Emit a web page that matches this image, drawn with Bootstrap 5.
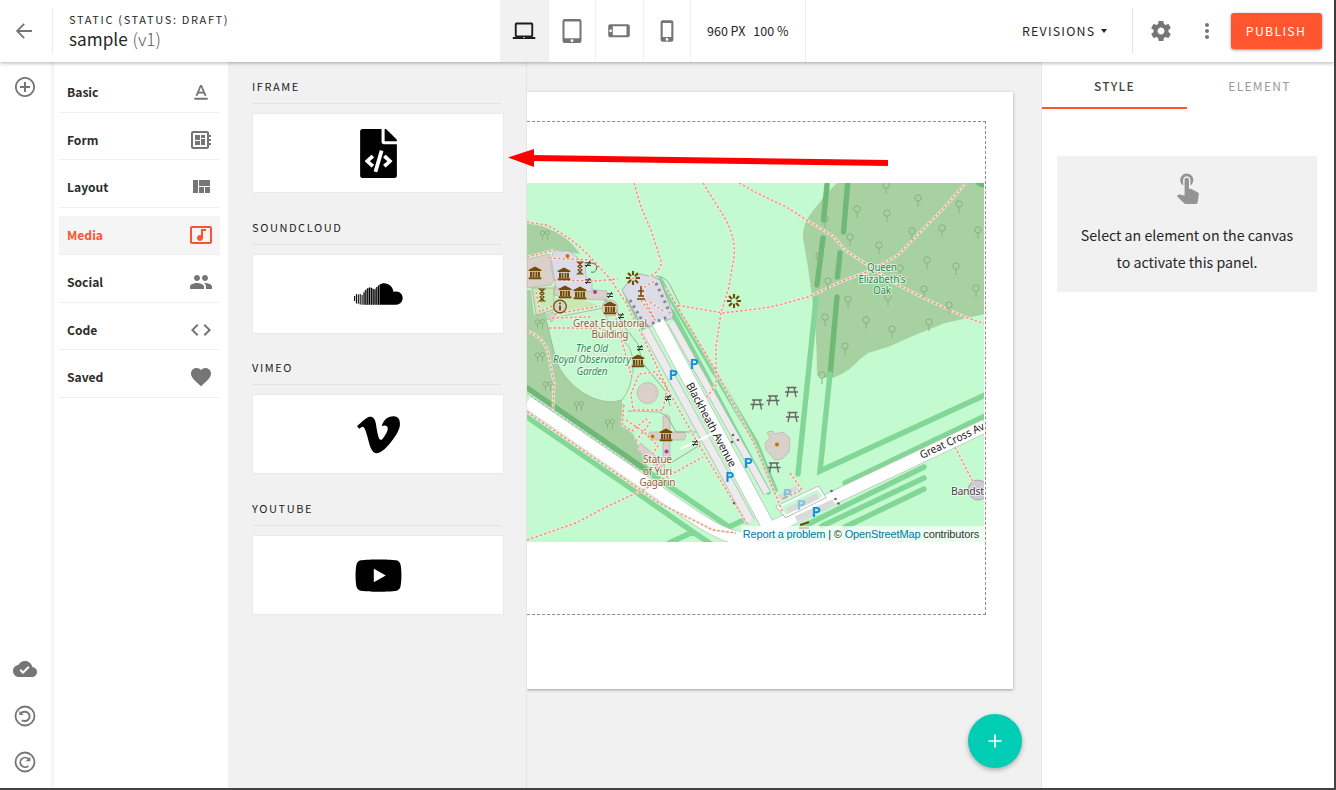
<!DOCTYPE html>
<html lang="en">
<head>
<meta charset="utf-8">
<meta name="viewport" content="width=device-width, initial-scale=1">
<title>sample (v1)</title>
<link href="https://cdn.jsdelivr.net/npm/bootstrap@5.3.0/dist/css/bootstrap.min.css" rel="stylesheet">
<script src="https://cdn.jsdelivr.net/npm/bootstrap@5.3.0/dist/js/bootstrap.bundle.min.js" defer></script>
<style>
:root{--ui:"Noto Sans CJK SC","Noto Sans",sans-serif;--ink:#262626;--mute:#757575;--accent:#ff562f;--bg:#f1f1f1}
html,body{height:100%}
body{font-family:var(--ui);font-size:14px;line-height:20px;color:var(--ink);background:#434343;overflow:hidden}
svg{display:block;flex:none}
.ic{fill:currentColor}
.app{width:1334px;height:788px;background:#fff}
.topbar{height:62px;background:#fff;box-shadow:0 1px 4px rgba(0,0,0,.32);z-index:5}
.back{width:53px;height:46px;border-right:1px solid #ececec;color:var(--mute)}
.back svg{margin-left:12px}
.titles{width:447px;padding:11px 0 0 16px;height:62px}
.eyebrow{font-size:11px;letter-spacing:1.65px;line-height:17px}
.doc{font-size:17.2px;line-height:21px;letter-spacing:0}
.doc span{font-weight:300;color:#5a5a5a;margin-left:1px}
.device{width:47.5px;height:62px;color:var(--mute);border-right:1px solid #f0f0f0}
.device.on{background:var(--bg);color:#1d1d1d;width:48.5px}
.zoomtxt{width:114.5px;height:62px;border-right:1px solid #ececec;font-size:12.5px;padding-left:16px;gap:8px}
.rev{font-size:12.4px;letter-spacing:1.2px;margin-left:216.5px;width:110.500px;height:46px;border-right:1px solid #e6e6e6}
.caret{border:3.5px solid transparent;border-top:4.5px solid #222;border-bottom:0;margin-left:6px}
.gear{color:var(--mute);margin-left:16px}
.more{color:var(--mute);margin-left:22.5px}
.pub{width:91px;height:36px;background:var(--accent);color:#fff;font-size:12.3px;letter-spacing:1.3px;border:0;border-radius:3px;padding:0;margin-right:12.500px;box-shadow:0 1px 3px rgba(0,0,0,.45);line-height:36px}
.rail{width:54px;background:#fff;color:var(--mute);border-right:3px solid #f6f6f6;padding:13px 0 14px 13px}
.undo{margin-top:22.5px}
.cats{width:174px;padding:3px 8px 0 5px;background:#fff}
.cat{height:39.5px;margin-top:8px;padding:0 7px 0 8px;border-bottom:1px solid #f0f0f0;font-weight:700;font-size:12.1px;color:#2c2c2c}
.cat svg{color:var(--mute)}
.cat.on{background:#f5f5f5}
.cat.on,.cat.on svg{color:#f9542f}
.tray{width:299px;background:var(--bg);border-right:1px solid #e4e4e4;padding:14px 22px 0 24px;z-index:2}
.kind{height:140.7px}
.kind h2{font-size:11px;font-weight:400;letter-spacing:1.58px;line-height:20px;margin:0 3px 9px 0;height:28px;border-bottom:1px solid #e2e2e2;color:#222}
.tile{height:80px;background:#fff;border:1px solid #e9e9e9;color:#000}
.stage{width:515px;background:var(--bg);border-right:1px solid #e9e9e9}
.sheet{width:486px;height:597px;margin-top:30px;padding-top:29px;background:#fff;box-shadow:0 1px 3px rgba(0,0,0,.35)}
.drop{width:458.5px;height:494px;border:1px dashed #8c8c8c;border-left:0;padding-top:61px}
.map{width:457px;height:359px}
.credit{right:0;bottom:0;height:16px;padding:0 5px 0 2px;background:rgba(255,255,255,.7);font:11px/17px "Liberation Sans",sans-serif;letter-spacing:-.15px;color:#333;white-space:nowrap}
.credit span{color:#0078a8}
.fab{left:968px;top:714px;width:54px;height:54px;background:#00cdb3;box-shadow:0 2px 5px rgba(0,0,0,.3);z-index:6}
.arrow{left:508px;top:145px;z-index:7}
.side{width:292px;background:#fff}
.tab{flex:0 0 145px;height:47px;text-align:center;font-size:12px;line-height:48px;letter-spacing:1.3px;color:#9a9a9a}
.tab.on{font-weight:500;color:#444;border-bottom:2px solid var(--accent)}
.hint{margin:47px 0 0 15px;width:260px;height:136px;background:var(--bg);font-size:14.2px;line-height:27px;text-align:center;padding-top:13px}
.hint svg{color:#949494;margin-bottom:18px}
/* map drawing */
.rows path{fill:none;stroke:#82d696;stroke-width:5.4;stroke-linecap:round}
.rows .dk{stroke:#6fb877}
.casing,.dots{fill:none;stroke-linejoin:round}
.casing{stroke:#eaf0e0;stroke-width:3;opacity:.75}
.dots{stroke:#fa8a80;stroke-width:1.400;stroke-dasharray:2.500 2}
.bld{fill:#d9d0c9;stroke:#b8a89c;stroke-width:.6}
.lbl{font-family:"Noto Sans",sans-serif;font-size:10px;text-anchor:middle;paint-order:stroke;stroke:rgba(255,255,255,.6);stroke-width:2px;stroke-linejoin:round}
.avenue{font-size:11px}
.avenue.east,.band{text-anchor:start}
.band{font-size:10.500px}
.park{font-family:"Noto Sans",sans-serif;font-size:15px;font-weight:600;fill:#0092da;text-anchor:middle}
</style>
</head>
<body>
<svg width="0" height="0" class="position-absolute">
<defs>
<g id="mus" fill="#734a08"><path d="M-6.300-3.200L0-6.600L6.300-3.200V-2H-6.300zM-5-1.300h2.100v5.300h-2.100zM-2.300-1.300h1.800v5.300h-1.800zM.5-1.300h1.800v5.300H.5zM2.900-1.300h2.100v5.300H2.900zM-6.300 4.300H6.300V6.200H-6.300z"/></g>
<g id="burst" stroke="#734a08" stroke-width="2.100"><path d="M0-7v4.200M0 7V2.800M-7 0h4.200M7 0H2.800M-5-5l3 3M5 5L2 2M5-5L2-2M-5 5l3-3"/></g>
<g id="gate" stroke="#333" stroke-width="1" fill="none"><path d="M-3-1.200h6M-3 1.500h6M-1.800 3L1.800-3"/></g>
<g id="pic" stroke="#666" stroke-width="1.300" fill="none"><path d="M-5-4.500H5M-6.500 0H6.500M-2.500-4.500L-4.500 5M2.500-4.500L4.500 5"/></g>
<g id="tree" stroke="#86b283" stroke-width="1" fill="none"><circle cy="-2" r="3.200"/><path d="M0 1v6"/></g>
<g id="trees" stroke="#86b081" stroke-width=".9" fill="none"><circle cx="-2.500" cy="-2" r="2.200"/><path d="M-2.500 0v5M2.500 5V0"/><circle cx="2.500" cy="-2.500" r="2"/></g>
<g id="hour" fill="none" stroke="#734a08" stroke-width="1.200"><path d="M-3.500-6h7M-3.500 6h7M-2.200-6L2-1.500L-2 2L2.200 6M2.200-6L-2-1.500L2 2L-2.200 6"/></g>
<path id="walks" d="M634 183L641 207L651 230L661 261Q662 270 649 277M703 183L726 220Q736 240 734 257L729 287L721 313L716 347V385L706 398M739 183L757 193L788 208L808 221L833 236L845 250L872 268L898 285L928 300L965 317L985 324M966 183L942 210L898 255L872 270L845 280L808 297L775 306L757 309L723 313L676 305M527 222L546 225Q572 237 593 260L611 280L626 303L641 333L668 390L696 440L747 524M527 540L576 523L606 507L643 490L703 457M527 412L626 480L659 503L713 530L736 533M527 331Q546 338 549 357L554 383L553 410M955 447L973 482M665 286L716 371L756 447L783 513M790 473L802 490L780 500M527 257L555 250M554 280L594 281L618 279M549 258L590 260L598 268M555 314L600 306M549 328h50l22 10 11 40M633 410h30l4-22-12-16-16 2-8 20zM641 300L655 320L640 290L656 280M626 420l18 12 14 14 -10 14 20 10M624 405l-2 20 10 6 14-12 4 4-14 18M552 318L590 317M536 292L540 312L552 306M650 302L665 312M612 310l14 30"/>
</defs></svg>
<div class="app d-flex flex-column">
<header class="topbar d-flex align-items-center position-relative">
  <div class="back d-flex align-items-center"><svg class="ic" width="24" height="24" viewBox="0 0 24 24"><path d="M20 11H7.400l5.400-5.400L11.500 4.200 3.900 12l7.600 7.800 1.300-1.400L7.400 13H20z"/></svg></div>
  <div class="titles"><div class="eyebrow">STATIC (STATUS: DRAFT)</div><div class="doc">sample <span>(v1)</span></div></div>
  <div class="device on d-flex align-items-center justify-content-center"><svg class="ic" width="24" height="24" viewBox="0 0 24 24"><path fill-rule="evenodd" d="M4.500 3.500h15A1.700 1.700 0 0 1 21.200 5.200V16.500a1.700 1.700 0 0 1-.8 1.500H23.300v2H.8v-2h2.800a1.700 1.700 0 0 1-.8-1.500V5.200A1.700 1.700 0 0 1 4.500 3.500zm.2 2v11h14.600V5.500zM12 17.700a.8.8 0 1 0 0 1.600.8.8 0 0 0 0-1.600z"/></svg></div>
  <div class="device d-flex align-items-center justify-content-center"><svg class="ic" width="20" height="24" viewBox="0 0 20 24"><path fill-rule="evenodd" d="M2.500 0h15A2 2 0 0 1 19.500 2v20a2 2 0 0 1-2 2h-15a2 2 0 0 1-2-2V2a2 2 0 0 1 2-2zM2.500 2.500v16.800h15V2.500zM10 20.300a1.400 1.400 0 1 0 0 2.800 1.400 1.400 0 0 0 0-2.800z"/></svg></div>
  <div class="device d-flex align-items-center justify-content-center"><svg class="ic" width="22" height="14" viewBox="0 0 22 14"><path fill-rule="evenodd" d="M2.200.3h17.600a2 2 0 0 1 2 2v9a2 2 0 0 1-2 2H2.200a2 2 0 0 1-2-2V2.300a2 2 0 0 1 2-2zM4.800 2.300v9h13.700v-9zM2.600 5.400a1.400 1.400 0 1 0 0 2.800 1.400 1.400 0 0 0 0-2.800z"/></svg></div>
  <div class="device d-flex align-items-center justify-content-center"><svg class="ic" width="14" height="22" viewBox="0 0 14 22"><path fill-rule="evenodd" d="M2.600.2h8.800a2 2 0 0 1 2 2v17.600a2 2 0 0 1-2 2H2.600a2 2 0 0 1-2-2V2.200a2 2 0 0 1 2-2zM2.700 3v14h8.600V3zM7 18a1.400 1.400 0 1 0 0 2.800A1.400 1.400 0 0 0 7 18z"/></svg></div>
  <div class="zoomtxt d-flex align-items-center"><span>960 PX</span><span>100 %</span></div>
  <div class="rev d-flex align-items-center">REVISIONS<i class="caret"></i></div>
  <svg class="ic gear" width="24" height="24" viewBox="0 0 24 24"><path d="M19.430 12.980c.04-.32.07-.64.07-.98s-.03-.66-.07-.98l2.110-1.650c.19-.15.24-.42.12-.64l-2-3.460c-.12-.22-.39-.3-.61-.22l-2.490 1c-.52-.4-1.080-.73-1.690-.98l-.38-2.650C14.460 2.180 14.250 2 14 2h-4c-.25 0-.46.18-.49.42l-.38 2.650c-.61.25-1.170.59-1.690.98l-2.490-1c-.23-.09-.49 0-.61.22l-2 3.460c-.13.22-.07.49.12.64l2.110 1.650c-.04.32-.07.65-.07.98s.03.66.07.98l-2.110 1.650c-.19.15-.24.42-.12.64l2 3.460c.12.22.39.3.61.22l2.490-1c.52.4 1.080.73 1.690.98l.38 2.650c.03.24.24.42.49.42h4c.25 0 .46-.18.49-.42l.38-2.650c.61-.25 1.170-.59 1.690-.98l2.490 1c.23.09.49 0 .61-.22l2-3.460c.12-.22.07-.49-.12-.64l-2.110-1.650zM12 15.500c-1.930 0-3.500-1.570-3.500-3.500s1.570-3.500 3.500-3.500 3.500 1.570 3.500 3.500-1.570 3.500-3.500 3.500z"/></svg>
  <svg class="ic more" width="24" height="24" viewBox="0 0 24 24"><path d="M12 8c1.100 0 2-.9 2-2s-.9-2-2-2-2 .9-2 2 .9 2 2 2zm0 2c-1.100 0-2 .9-2 2s.9 2 2 2 2-.9 2-2-.9-2-2-2zm0 6c-1.100 0-2 .9-2 2s.9 2 2 2 2-.9 2-2-.9-2-2-2z"/></svg>
  <button class="btn pub ms-auto">PUBLISH</button>
</header>
<div class="d-flex flex-grow-1" style="min-height:0">
  <nav class="rail d-flex flex-column">
    <svg class="ic mb-auto" width="24" height="24" viewBox="0 0 24 24"><path d="M13 7h-2v4H7v2h4v4h2v-4h4v-2h-4V7zm-1-5C6.480 2 2 6.480 2 12s4.480 10 10 10 10-4.480 10-10S17.520 2 12 2zm0 18.200c-4.500 0-8.200-3.700-8.200-8.200S7.500 3.800 12 3.800s8.200 3.700 8.200 8.200-3.700 8.200-8.200 8.200z"/></svg>
    <svg class="ic" width="24" height="24" viewBox="0 0 24 24"><path d="M19.350 10.040C18.670 6.590 15.640 4 12 4 9.110 4 6.600 5.640 5.350 8.040 2.340 8.360 0 10.910 0 14c0 3.310 2.690 6 6 6h13c2.760 0 5-2.240 5-5 0-2.640-2.050-4.780-4.650-4.960zM10 17l-3.500-3.500 1.410-1.410L10 14.170 15.180 9l1.410 1.410L10 17z"/></svg>
    <svg class="undo" width="24" height="24" viewBox="0 0 24 24" fill="none" stroke="currentColor" stroke-width="1.800"><circle cx="12" cy="12" r="9.500"/><path d="M8 8.700Q12 6.800 15 8.800Q17.300 11 16.400 14Q14 18.500 8.700 16.300"/><path d="M6.300 7v4h4.400z" fill="currentColor" stroke="none"/></svg>
    <svg class="undo" width="24" height="24" viewBox="0 0 24 24" fill="none" stroke="currentColor" stroke-width="1.800"><circle cx="12" cy="12" r="9.500"/><path d="M15.500 9A4.800 4.800 0 1 0 15.300 16"/><path d="M17.300 7v4.300H12.700z" fill="currentColor" stroke="none"/></svg>
  </nav>
  <nav class="cats">
    <div class="cat d-flex align-items-center justify-content-between">Basic<svg class="ic" width="24" height="24" viewBox="0 0 24 24"><path d="M5.300 17.800v2h13.400v-2zM9.500 13.500h5l.9 2.300h2.100L12.900 5h-1.800L6.500 15.800h2.100zM12 7.100l1.800 4.700h-3.600z"/></svg></div>
    <div class="cat d-flex align-items-center justify-content-between">Form<svg class="ic" width="24" height="24" viewBox="0 0 24 24"><path d="M22 9V7h-2V5c0-1.100-.9-2-2-2H4c-1.100 0-2 .9-2 2v14c0 1.100.9 2 2 2h14c1.100 0 2-.9 2-2v-2h2v-2h-2v-2h2v-2h-2V9h2zm-4 10H4V5h14v14zM6 13h5v4H6zm6-6h4v3h-4zM6 7h5v5H6zm6 4h4v6h-4z"/></svg></div>
    <div class="cat d-flex align-items-center justify-content-between">Layout<svg class="ic" width="24" height="24" viewBox="0 0 24 24"><path d="M10 18h5v-6h-5v6zm-6 0h5V5H4v13zm12 0h5v-6h-5v6zM10 5v6h11V5H10z"/></svg></div>
    <div class="cat on d-flex align-items-center justify-content-between">Media<svg class="ic" width="24" height="24" viewBox="0 0 24 24"><path d="M21 3H3c-1.100 0-2 .9-2 2v14c0 1.100.9 2 2 2h18c1.100 0 2-.9 2-2V5c0-1.100-.9-2-2-2zm0 16H3V5h18v14zM8 15c0-1.660 1.340-3 3-3 .35 0 .69.07 1 .18V6h5v2h-3v7.030c-.02 1.640-1.350 2.970-3 2.970-1.660 0-3-1.340-3-3z"/></svg></div>
    <div class="cat d-flex align-items-center justify-content-between">Social<svg class="ic" width="24" height="24" viewBox="0 0 24 24"><path d="M16 11c1.660 0 2.990-1.340 2.990-3S17.660 5 16 5c-1.660 0-3 1.340-3 3s1.340 3 3 3zm-8 0c1.660 0 2.990-1.340 2.990-3S9.660 5 8 5C6.340 5 5 6.340 5 8s1.340 3 3 3zm0 2c-2.330 0-7 1.170-7 3.500V19h14v-2.500c0-2.330-4.670-3.500-7-3.500zm8 0c-.29 0-.62.02-.97.05 1.160.84 1.970 1.970 1.970 3.450V19h6v-2.500c0-2.330-4.670-3.500-7-3.500z"/></svg></div>
    <div class="cat d-flex align-items-center justify-content-between">Code<svg class="ic" width="24" height="24" viewBox="0 0 24 24"><path d="M9.400 16.600L4.800 12l4.600-4.600L8 6l-6 6 6 6 1.400-1.400zm5.200 0l4.600-4.600-4.600-4.600L16 6l6 6-6 6-1.400-1.400z"/></svg></div>
    <div class="cat d-flex align-items-center justify-content-between">Saved<svg class="ic" width="24" height="24" viewBox="0 0 24 24"><path d="M12 21.350l-1.450-1.320C5.400 15.360 2 12.280 2 8.500 2 5.420 4.420 3 7.500 3c1.740 0 3.410.81 4.500 2.090C13.090 3.810 14.760 3 16.500 3 19.580 3 22 5.420 22 8.500c0 3.780-3.400 6.860-8.550 11.540L12 21.350z"/></svg></div>
  </nav>
  <section class="tray position-relative">
    <div class="kind"><h2>IFRAME</h2><div class="tile d-flex align-items-center justify-content-center"><svg class="ic" width="37" height="49" viewBox="0 0 384 512"><path d="M384 121.941V128H256V0h6.059c6.365 0 12.470 2.529 16.971 7.029l97.941 97.941A24.005 24.005 0 0 1 384 121.941zM248 160c-13.200 0-24-10.800-24-24V0H24C10.745 0 0 10.745 0 24v464c0 13.255 10.745 24 24 24h336c13.255 0 24-10.745 24-24V160H248zM123.206 400.505a5.400 5.400 0 0 1-7.633.246l-64.866-60.812a5.400 5.400 0 0 1 0-7.879l64.866-60.812a5.400 5.400 0 0 1 7.633.246l19.579 20.885a5.400 5.400 0 0 1-.372 7.747L101.650 336l40.763 35.874a5.400 5.400 0 0 1 .372 7.747l-19.579 20.884zm51.295 50.479l-27.970-8.120a5.402 5.402 0 0 1-3.687-6.695l61.440-211.626a5.402 5.402 0 0 1 6.695-3.688l27.970 8.120a5.402 5.402 0 0 1 3.687 6.695l-61.440 211.626a5.401 5.401 0 0 1-6.695 3.688zm160.792-111.045l-64.866 60.812a5.400 5.400 0 0 1-7.633-.246l-19.580-20.885a5.400 5.400 0 0 1 .372-7.747L284.350 336l-40.763-35.874a5.400 5.400 0 0 1-.372-7.747l19.580-20.885a5.400 5.400 0 0 1 7.633-.246l64.866 60.812a5.400 5.400 0 0 1-.001 7.879z"/></svg></div></div>
    <div class="kind"><h2>SOUNDCLOUD</h2><div class="tile d-flex align-items-center justify-content-center"><svg width="49" height="22" viewBox="0 0 49 22"><path d="M25.500 1.700C27 .7 28.400.2 30 .2c5 0 9 3.600 9.500 8.900.9-.4 1.700-.5 2.600-.5 3.800 0 6.600 2.900 6.600 6.500s-2.900 6.700-6.600 6.700H25.500z"/><path d="M.6 13v5M2.400 11v9.500M4.300 11.500v9.300M6.200 11v10.500M8.100 12v9.700M10 9.500v12.200M11.800 7v14.800M13.700 5.200v16.600M15.500 4.500v17.300M17.400 4.700v17.100M19.200 6v15.800M21 6.500v15.300M22.800 4v17.800M24.500 2.400v19.400" stroke="#000" stroke-width="1.050"/><path d="M9.500 21.800V9.500q2-4.500 6.500-5 2.800.2 4 1.700l5.500-4.400v20z" opacity=".35"/></svg></div></div>
    <div class="kind"><h2>VIMEO</h2><div class="tile d-flex align-items-center justify-content-center"><svg class="ic" width="43" height="49" viewBox="0 0 448 512"><path d="M447.800 153.600c-2 43.600-32.400 103.300-91.400 179.100-60.900 79.200-112.400 118.800-154.600 118.800-26.100 0-48.200-24.100-66.300-72.300C100.300 250 85.300 174.300 56.200 174.300c-3.400 0-15.100 7.100-35.200 21.100L0 168.200c51.600-45.300 100.900-95.700 131.800-98.500 34.900-3.400 56.300 20.500 64.400 71.500 28.700 181.500 41.400 208.900 93.600 126.700 18.700-29.600 28.800-52.100 30.200-67.600 4.800-45.900-35.800-42.800-63.300-31 22-72.100 64.100-107.100 126.200-105.100 45.800 1.200 67.500 31.100 64.900 89.400z"/></svg></div></div>
    <div class="kind"><h2>YOUTUBE</h2><div class="tile d-flex align-items-center justify-content-center"><svg class="ic" width="49" height="43" viewBox="0 0 576 512"><path d="M549.655 124.083c-6.281-23.650-24.787-42.276-48.284-48.597C458.781 64 288 64 288 64S117.220 64 74.629 75.486c-23.497 6.322-42.003 24.947-48.284 48.597-11.412 42.867-11.412 132.305-11.412 132.305s0 89.438 11.412 132.305c6.281 23.650 24.787 41.500 48.284 47.821C117.220 448 288 448 288 448s170.780 0 213.371-11.486c23.497-6.321 42.003-24.171 48.284-47.821 11.412-42.867 11.412-132.305 11.412-132.305s0-89.438-11.412-132.305zm-317.510 213.508V175.185l142.739 81.205-142.739 81.201z"/></svg></div></div>
  </section>
  <main class="stage">
    <div class="sheet"><div class="drop"><div class="map position-relative">
<svg width="457" height="359" viewBox="527 183 457 359">
<rect x="527" y="183" width="457" height="359" fill="#c3fad0"/>
<g fill="#a7d1a1">
<path d="M837 183L827 193L812 212Q802 225 803 238L808 267L812 297Q817 330 817 375Q825 380 835 377Q850 371 859 360L868 353L888 347L915 335L945 323L985 314V183z"/>
<path d="M527 222Q546 225 564 237Q574 245 580 254L556 250L527 257z"/>
<path d="M527 290H531L534 315L546 313L556 360Q562 378 583 393Q605 406 622 400V424L633 434L645 462L660 482L527 388z"/>
</g>
<path d="M975 183Q979 188 985 187V183z" fill="#6fb877"/>
<g class="rows">
<path class="dk" d="M827 185L823.500 220M823 238L817 285M847.500 185L843.500 232M840 253L837.500 277M837 297L830 376"/>
<path d="M816 299L798 474M830 374L820 471L985 395M845 483L985 416M924 467L802 527M924 478L822 526M924 489L845 527"/>
<path class="dk" d="M527 388L626 456L650 473"/><path d="M650 473L729 527L748 518M527 417L626 485L693 532L714 546M669 543L693 532M628 300L747 518M660 280L756 443L775 490M672 312L768 492"/>
</g>
<path d="M546 319L556 360Q562 378 583 393Q605 406 622 400Q630 390 633 372Q634 355 628 345L612 332L603 308L548 319z" fill="#c5f8cf" stroke="#8fae93" stroke-width=".7"/>
<g class="bld">
<path d="M527 259L549 254L554 280L551 285L527 288z"/>
<path d="M554 286L607 291V300L573 299L554 295z"/><circle cx="610" cy="308" r="8"/>
<path d="M547 314l6-2 3 6-5 4z"/>
<circle cx="647.600" cy="393" r="10.500"/>
<path d="M636 449l5-6 24 22-4 6zM663 432v-15l3.500-3 3.500 3v15h14l2 4-2 4h-14v17h-7v-17h-13l-3-4 3-4z"/>
<path d="M767 432L773 431L774 434L783 432L790 438L789 452L782 459L775 460L766 450L765 443L770 438z"/>
<circle cx="978" cy="490" r="10" fill="#cfc9d3" stroke="#8d8496"/>
</g>
<path d="M551 258L554 251H569L585 263L586 277L592 280V292L556 288z" fill="#dcdce8" stroke="#aaa" stroke-width=".6"/>
<path d="M532 288h22v22l-18 5z" fill="#c5eab7" stroke="#999" stroke-width=".6"/><path d="M556 298h18l16 4 10 4-34 8-12-2z" fill="#c9e8b2"/>
<path d="M622 290L630 280L640 274L654 277L660 280L673 313V318L646 328L642 326z" fill="#dcdce8" stroke="#999" stroke-width=".7"/>
<path d="M656 276q9 0 14 9l10 20M628 411l32 1 8 6 8 14 23 0 1 13-31 19M623 424v-20M622 424l12 8M604 300q16 8 18 24l16 20 4 18 24 30 4 14" fill="none" stroke="#889f89" stroke-width=".8"/>
<g fill="none">
<path d="M645 329L751 522" stroke="#bbb" stroke-width="9"/><path d="M645 329L751 522" stroke="#ececec" stroke-width="7.500"/>
<path d="M671 322L767 493" stroke="#bbb" stroke-width="8"/><path d="M671 322L767 493" stroke="#ececec" stroke-width="6.500"/>
<path d="M527 402L626 470L690 514Q730 542 750 538L780 524L833 498L985 426M658 322L770 530" stroke="#b8c6b8" stroke-width="14"/>
<path d="M527 402L626 470L690 514Q730 542 750 538L780 524L833 498L985 426M658 322L770 530" stroke="#fff" stroke-width="12.500"/>
<path d="M527 393L640 470" stroke="#999" stroke-width="1.500" stroke-dasharray="3 1.500" opacity=".5"/>
<path d="M680 449L712 434" stroke="#fff" stroke-width="2"/>
<path d="M778 507L818 488L824 497L786 516z" stroke="#aaa" stroke-width="3.500" fill="#c3fad0"/><path d="M778 507L818 488L824 497L786 516z" stroke="#fff" stroke-width="2.200" fill="#c3fad0"/>
<path d="M787 511L818 496M779 498L797 488M796 519L834 502" stroke="#dadada" stroke-width="6"/>
</g>
<use href="#walks" class="casing"/><use href="#walks" class="dots"/>
<g>
<use href="#tree" x="886" y="187"/><use href="#tree" x="918" y="200"/><use href="#tree" x="857" y="211"/><use href="#tree" x="887" y="215"/><use href="#tree" x="825" y="221"/><use href="#tree" x="959" y="206"/><use href="#tree" x="850" y="239"/><use href="#tree" x="912" y="233"/><use href="#tree" x="942" y="230"/><use href="#tree" x="978" y="232"/><use href="#tree" x="879" y="247"/><use href="#tree" x="819" y="258"/><use href="#tree" x="927" y="262"/><use href="#tree" x="956" y="268"/><use href="#tree" x="900" y="270"/><use href="#tree" x="828" y="283"/><use href="#tree" x="924" y="291"/><use href="#tree" x="976" y="290"/><use href="#tree" x="848" y="301"/><use href="#tree" x="888" y="299"/><use href="#tree" x="949" y="307"/><use href="#tree" x="825" y="319"/><use href="#tree" x="866" y="322"/><use href="#tree" x="892" y="331"/><use href="#tree" x="929" y="324"/><use href="#tree" x="845" y="348"/><use href="#tree" x="822" y="377"/>
<use href="#trees" x="545" y="235"/><use href="#trees" x="540" y="324"/><use href="#trees" x="540" y="357"/><use href="#trees" x="548" y="386"/><use href="#trees" x="579" y="406"/><use href="#trees" x="610" y="424"/>
<use href="#mus" x="535" y="273"/><use href="#mus" x="564" y="274"/><use href="#mus" x="565" y="292"/><use href="#mus" x="580" y="293"/><use href="#mus" x="610" y="308"/><use href="#mus" x="638" y="361"/><use href="#mus" x="666" y="435"/>
<use href="#burst" x="633" y="278"/><use href="#burst" x="734" y="301"/>
<use href="#hour" x="580" y="268"/><use href="#hour" x="542" y="295"/>
<path d="M641 286v10M638 291h6M638 296h6M637 299h8" stroke="#734a08" stroke-width="1.500"/>
<circle cx="560" cy="306.500" r="6.300" fill="#d9d0c9" stroke="#734a08" stroke-width="1.200"/><path d="M560 302.500v1.800M560 305.500v5" stroke="#734a08" stroke-width="1.800"/>
<path d="M588 266a4.500 4.500 0 1 1 3 6" fill="none" stroke="#666" stroke-width="1"/>
<use href="#gate" x="588" y="264"/><use href="#gate" x="588" y="281"/><use href="#gate" x="610" y="295"/><use href="#gate" x="621" y="316"/><use href="#gate" x="640" y="348"/><use href="#gate" x="668" y="398"/><use href="#gate" x="695" y="443"/>
<use href="#pic" x="791.500" y="392"/><use href="#pic" x="773" y="400.500"/><use href="#pic" x="757" y="404.500"/><use href="#pic" x="792.500" y="417"/><use href="#pic" x="774" y="467.500"/>
<path d="M799 528h10M800 525l9-3" stroke="#734a08" stroke-width="2"/>
<g fill="#c77400"><circle cx="567.500" cy="256" r="2"/><circle cx="652.500" cy="436.500" r="2"/><circle cx="777" cy="444.500" r="2"/></g>
<g fill="#ac39ac"><circle cx="595" cy="292" r="2"/><circle cx="666.500" cy="451.500" r="2"/></g>
<path d="M630 300l16 27M656 283l14 30M646 326l24-10" fill="none" stroke="#888" stroke-width="3" stroke-dasharray="2.500 4"/>
<g fill="#666"><circle cx="831.500" cy="491" r="1.300"/><circle cx="835.500" cy="499" r="1.300"/><circle cx="838.500" cy="503.500" r="1.300"/><circle cx="733" cy="435" r="1.300"/><circle cx="738" cy="440" r="1.300"/><circle cx="732" cy="442" r="1.300"/><circle cx="734" cy="503" r="1.300"/></g>
</g>
<g class="lbl" fill="#94613c">
<text x="610" y="326.500" textLength="74">Great Equatorial</text><text x="610" y="338" textLength="37">Building</text>
<text x="657.500" y="463" textLength="29">Statue</text><text x="657.500" y="474.500" textLength="29">of Yuri</text><text x="657.500" y="486" textLength="36">Gagarin</text></g>
<g class="lbl" fill="#1f8f4e">
<g font-style="italic"><text x="592" y="351.500" textLength="32">The Old</text><text x="592" y="363" textLength="78">Royal Observatory</text><text x="592" y="374.500" textLength="31">Garden</text></g>
<text x="882" y="271" textLength="30">Queen</text><text x="882" y="282.500" textLength="47">Elizabeth's</text><text x="882" y="294" textLength="18">Oak</text></g>
<g class="lbl" fill="#222"><text class="avenue" transform="translate(708 426.500) rotate(61.800)" textLength="94">Blackheath Avenue</text>
<text class="avenue east" transform="translate(922 459) rotate(-25.300)" textLength="70" lengthAdjust="spacingAndGlyphs">Great Cross Av</text>
<text class="band" x="951" y="494.500" fill="#444" textLength="33">Bandst</text></g>
<g class="park"><text x="673" y="379.500">P</text><text x="694" y="368.500">P</text><text x="748" y="467.500">P</text><text x="729.500" y="481.500">P</text><text x="816" y="516.500">P</text><text x="787" y="498.500" opacity=".4">P</text><text x="801" y="509.500" opacity=".4">P</text></g>
</svg>
<div class="credit position-absolute"><span>Report a problem</span> | © <span>OpenStreetMap</span> contributors</div>
    </div></div></div>
  </main>
  <aside class="side">
    <div class="d-flex"><div class="tab on">STYLE</div><div class="tab">ELEMENT</div></div>
    <div class="hint"><svg class="ic mx-auto" width="35" height="35" viewBox="0 0 24 24"><path d="M9 11.240V7.500C9 6.120 10.120 5 11.500 5S14 6.120 14 7.500v3.740c1.210-.81 2-2.180 2-3.740C16 5.010 13.990 3 11.500 3S7 5.010 7 7.500c0 1.560.79 2.930 2 3.740zm9.840 4.630l-4.540-2.260c-.17-.07-.35-.11-.54-.11H13v-6c0-.83-.67-1.500-1.500-1.500S10 6.670 10 7.500v10.740l-3.430-.72c-.08-.01-.15-.03-.24-.03-.31 0-.59.13-.79.33l-.79.8 4.940 4.940c.27.27.65.44 1.060.44h6.790c.75 0 1.330-.55 1.440-1.280l.75-5.270c.01-.07.02-.14.02-.2 0-.62-.38-1.160-.91-1.380z"/></svg>Select an element on the canvas<br>to activate this panel.</div>
  </aside>
</div>
</div>
<svg class="arrow position-absolute" width="384" height="26" viewBox="508 145 384 26"><path d="M888 163L530 158" stroke="#f00" stroke-width="6"/><path d="M508 157.500L534 149V167z" fill="#f00"/></svg>
<button class="fab btn rounded-circle border-0 p-0 position-absolute d-flex align-items-center justify-content-center"><svg width="14" height="14" viewBox="0 0 14 14"><path d="M7 .5v13M.5 7h13" stroke="#fff" stroke-width="1.700"/></svg></button>
</body>
</html>
